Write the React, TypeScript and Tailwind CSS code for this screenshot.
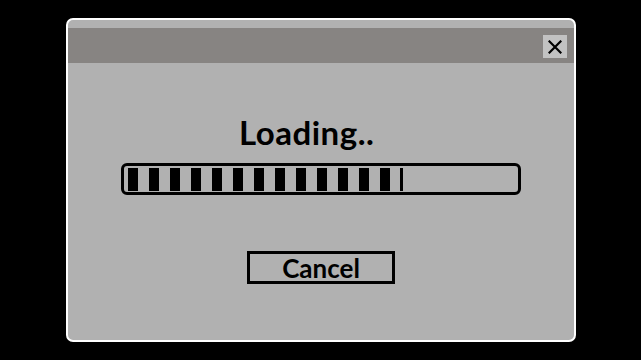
import React from 'react';

const SEGMENTS = 13;

const App = () => {
  return (
    <div className="w-[641px] h-[360px] bg-black pt-[18px] pl-[66px]">
      <div className="w-[510px] h-[324px] border-2 border-white rounded-[7px] bg-[#b1b1b1] overflow-hidden flex flex-col">
        {/* title bar */}
        <div className="mt-[8px] h-[35px] bg-[#878482] flex justify-end pr-[7px] pt-[7px]">
          <button className="w-[24px] h-[23px] bg-[#c2c2c2] flex items-center justify-center">
            <svg width="14" height="14" viewBox="0 0 14 14">
              <path d="M1.5 1.5 L12.5 12.5 M12.5 1.5 L1.5 12.5" stroke="#000" strokeWidth="2.2" strokeLinecap="square" />
            </svg>
          </button>
        </div>

        <div className="flex flex-col items-center">
          <div
            className="self-start ml-[171px] mt-[53px] h-[33px] text-[33px] leading-none font-bold tracking-[0.5px] text-black"
            style={{ fontFamily: 'Lato, "Open Sans", sans-serif' }}
          >
            Loading..
          </div>

          {/* progress bar */}
          <div className="mt-[14px] w-[400px] h-[32px] border-[3px] border-black rounded-[6px] flex items-center pl-[4px] gap-[11px]">
            {Array.from({ length: SEGMENTS }).map((_, i) => (
              <div key={i} className="w-[10px] h-[23px] bg-black" />
            ))}
            <div className="w-[3px] h-[23px] bg-black -ml-[1px]" />
          </div>

          <button
            className="mt-[56px] w-[148px] h-[33px] border-[3px] border-black flex items-center justify-center text-[26px] leading-none font-bold text-black"
            style={{ fontFamily: 'Lato, "Open Sans", sans-serif' }}
          >
            Cancel
          </button>
        </div>
      </div>
    </div>
  );
};

export default App;
